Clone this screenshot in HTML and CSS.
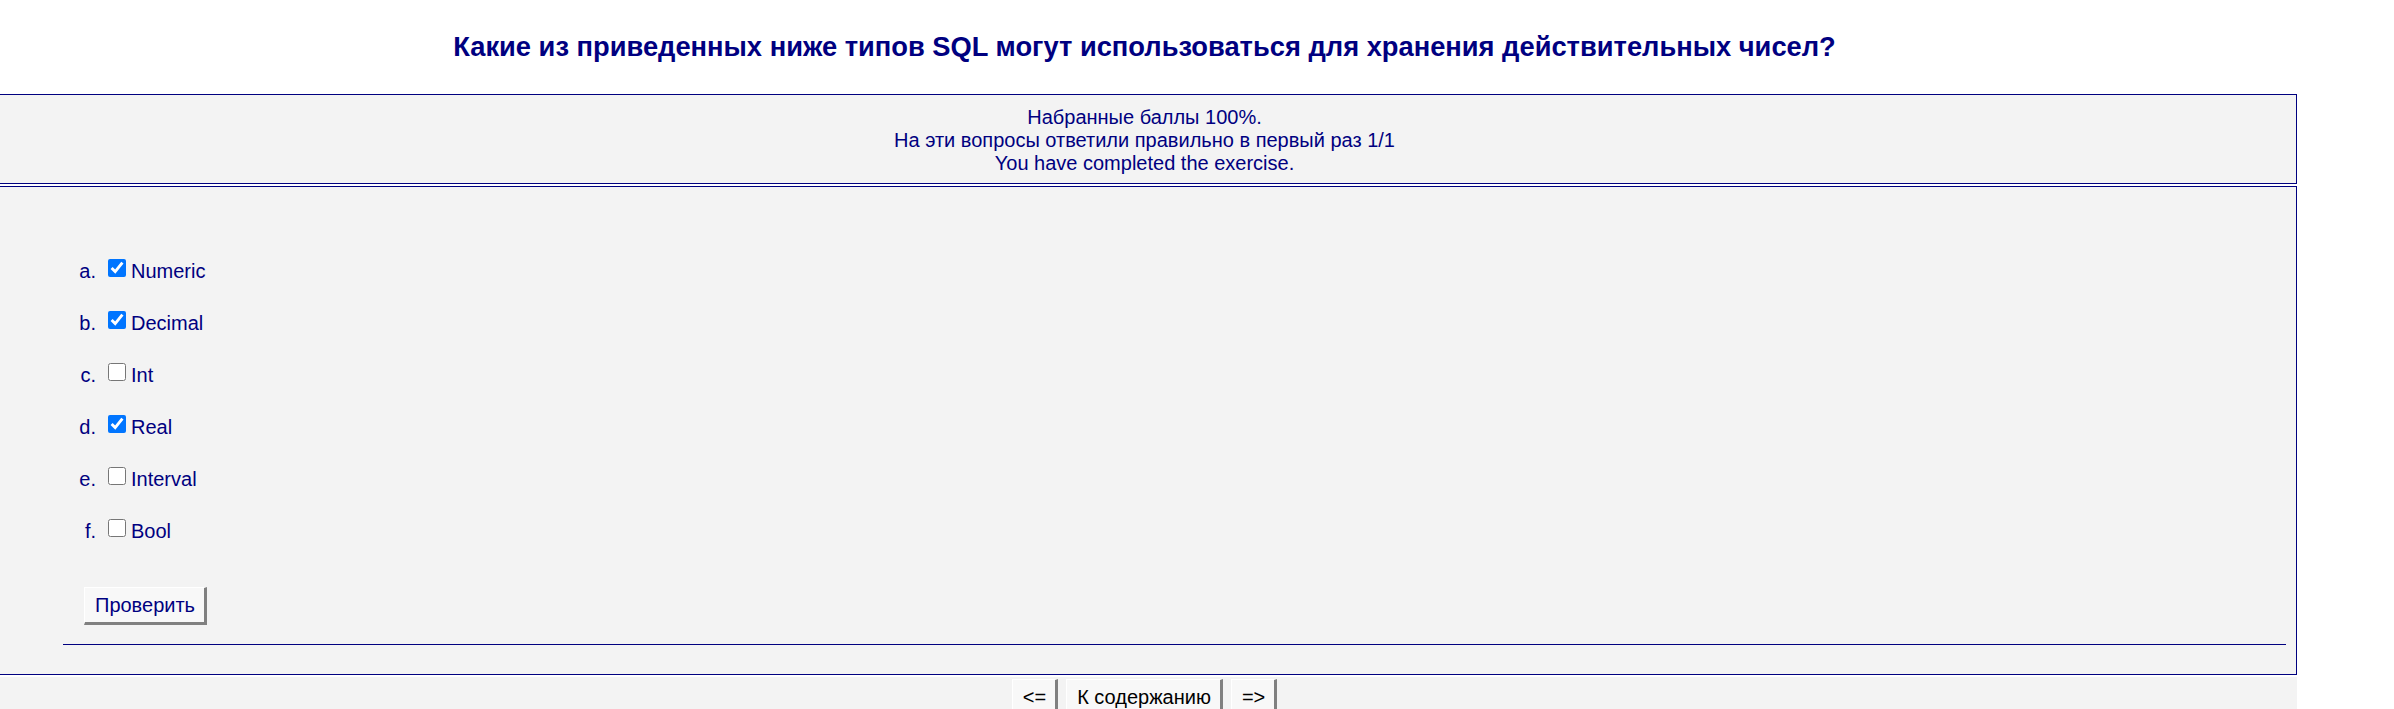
FILE: index.html
```html
<!DOCTYPE html>
<html lang="ru">
<head>
<meta charset="utf-8">
<title>Упражнение</title>
<link rel="stylesheet" href="styles.css">
</head>
<body>
<div class="page">
  <h2 class="title">Какие из приведенных ниже типов SQL могут использоваться для хранения действительных чисел?</h2>
  <div class="frame feedback">
    <div>Набранные баллы 100%.</div>
    <div>На эти вопросы ответили правильно в первый раз 1/1</div>
    <div>You have completed the exercise.</div>
  </div>
  <div class="frame question">
    <ol class="answers">
      <li><span class="letter">a.</span><input type="checkbox" checked><label>Numeric</label></li>
      <li><span class="letter">b.</span><input type="checkbox" checked><label>Decimal</label></li>
      <li><span class="letter">c.</span><input type="checkbox"><label>Int</label></li>
      <li><span class="letter">d.</span><input type="checkbox" checked><label>Real</label></li>
      <li><span class="letter">e.</span><input type="checkbox"><label>Interval</label></li>
      <li><span class="letter">f.</span><input type="checkbox"><label>Bool</label></li>
    </ol>
    <div class="check-row"><button class="btn check">Проверить</button></div>
    <hr class="rule">
  </div>
  <div class="navbar">
    <button class="btn nav">&lt;=</button>
    <button class="btn nav">К содержанию</button>
    <button class="btn nav">=&gt;</button>
  </div>
</div>
</body>
</html>
```
FILE: styles.css
```css
html, body {
  margin: 0;
  padding: 0;
  background: #ffffff;
  overflow: hidden;
}
body {
  font-family: "Liberation Sans", Arial, sans-serif;
  font-size: 20px;
  color: #000080;
}
.page {
  width: 2305px;
  margin-left: -8px;
}
.title {
  margin: 0;
  padding-top: 31px;
  height: 94px;
  box-sizing: border-box;
  font-size: 27.3px;
  line-height: 31px;
  font-weight: bold;
  text-align: center;
  color: #000080;
}
.frame {
  background: #f3f3f3;
  border: 1px solid #000080;
}
.feedback {
  height: 90px;
  box-sizing: border-box;
  padding-top: 11px;
  text-align: center;
  line-height: 23px;
}
.question {
  margin-top: 2px;
  height: 489px;
  box-sizing: border-box;
  padding-top: 72px;
}
.answers {
  list-style: none;
  margin: 0;
  padding: 0 0 0 63px;
}
.answers li {
  line-height: 23px;
  height: 23px;
  margin-bottom: 29px;
  white-space: nowrap;
}
.answers li:last-child {
  margin-bottom: 0;
}
.letter {
  display: inline-block;
  width: 40px;
  text-align: right;
  margin-right: 12px;
}
.answers input {
  width: 18px;
  height: 18px;
  margin: 0 5px 0 0;
  vertical-align: 1px;
  accent-color: #0075ff;
}
.check-row {
  box-sizing: border-box;
  padding-top: 45px;
  padding-left: 91px;
  height: 83px;
}
.btn {
  font-family: "Liberation Sans", Arial, sans-serif;
  font-size: 20px;
  line-height: 23px;
  background: #f8f8f8;
  border-style: solid;
  border-width: 1px 3px 3px 1px;
  border-color: #ffffff #808080 #808080 #ffffff;
  padding: 6px 9px 5px 10px;
  margin: 0;
  border-radius: 0;
}
.check {
  color: #000080;
  height: 38px;
}
.rule {
  margin: 19px 10px 0 70px;
  border: 0;
  border-top: 1px solid #000080;
  height: 0;
}
.navbar {
  margin-top: 2px;
  height: 40px;
  background: #f3f3f3;
  display: flex;
  justify-content: center;
  align-items: flex-start;
  gap: 8px;
  padding-top: 2px;
}
.nav {
  color: #000000;
  height: 38px;
}
```
